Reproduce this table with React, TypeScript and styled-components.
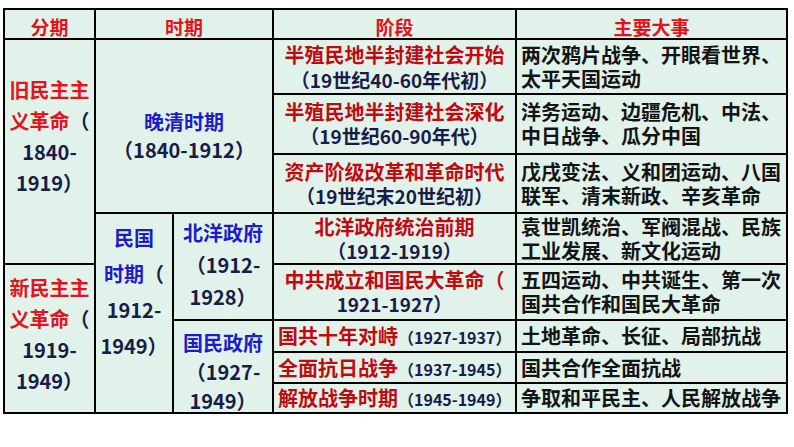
import React from "react";
import styled, { createGlobalStyle } from "styled-components";

const GlobalStyle = createGlobalStyle`
  body {
    margin: 0;
    background: #ffffff;
    font-family: "Noto Sans CJK SC", "Noto Sans", sans-serif;
  }
`;

type Tone = "red" | "darkred" | "blue" | "navy" | "black";

const tones: Record<Tone, string> = {
  red: "#e3141c",
  darkred: "#c00a10",
  blue: "#1c1cc8",
  navy: "#1a1c48",
  black: "#141414",
};

type Part = { t: string; tone: Tone; size?: number };
type Line = Part[];

const events: string[][] = [
  ["两次鸦片战争、开眼看世界、", "太平天国运动"],
  ["洋务运动、边疆危机、中法、", "中日战争、瓜分中国"],
  ["戊戌变法、义和团运动、八国", "联军、清末新政、辛亥革命"],
  ["袁世凯统治、军阀混战、民族", "工业发展、新文化运动"],
  ["五四运动、中共诞生、第一次", "国共合作和国民大革命"],
  ["土地革命、长征、局部抗战"],
  ["国共合作全面抗战"],
  ["争取和平民主、人民解放战争"],
];

const stages: { lines: Line[]; inline?: boolean; lh: number }[] = [
  {
    lh: 25,
    lines: [
      [{ t: "半殖民地半封建社会开始", tone: "darkred" }],
      [{ t: "（19世纪40-60年代初）", tone: "navy", size: 19 }],
    ],
  },
  {
    lh: 24,
    lines: [
      [{ t: "半殖民地半封建社会深化", tone: "darkred" }],
      [{ t: "（19世纪60-90年代）", tone: "navy", size: 19 }],
    ],
  },
  {
    lh: 24,
    lines: [
      [{ t: "资产阶级改革和革命时代", tone: "darkred" }],
      [{ t: "（19世纪末20世纪初）", tone: "navy", size: 19 }],
    ],
  },
  {
    lh: 24,
    lines: [
      [{ t: "北洋政府统治前期", tone: "darkred" }],
      [{ t: "（1912-1919）", tone: "navy", size: 19 }],
    ],
  },
  {
    lh: 24,
    lines: [
      [{ t: "中共成立和国民大革命（", tone: "darkred" }],
      [{ t: "1921-1927）", tone: "navy", size: 19 }],
    ],
  },
  {
    lh: 26,
    inline: true,
    lines: [
      [
        { t: "国共十年对峙", tone: "darkred" },
        { t: "（1927-1937）", tone: "navy", size: 16 },
      ],
    ],
  },
  {
    lh: 26,
    inline: true,
    lines: [
      [
        { t: "全面抗日战争", tone: "darkred" },
        { t: "（1937-1945）", tone: "navy", size: 16 },
      ],
    ],
  },
  {
    lh: 26,
    inline: true,
    lines: [
      [
        { t: "解放战争时期", tone: "darkred" },
        { t: "（1945-1949）", tone: "navy", size: 16 },
      ],
    ],
  },
];

const renderLines = (lines: Line[]) =>
  lines.map((line, i) => (
    <Row key={i}>
      {line.map((p, j) => (
        <Word key={j} $tone={p.tone} $size={p.size}>
          {p.t}
        </Word>
      ))}
    </Row>
  ));

const App = () => {
  return (
    <Page>
      <GlobalStyle />
      <Table>
        <HeadCell $col="1" $row="1">分期</HeadCell>
        <HeadCell $col="2 / 4" $row="1">时期</HeadCell>
        <HeadCell $col="4" $row="1">阶段</HeadCell>
        <HeadCell $col="5" $row="1">主要大事</HeadCell>

        <Cell $col="1" $row="2 / 6" $lh={31} $top $pt={34}>
          {renderLines([
            [{ t: "旧民主主", tone: "red" }],
            [
              { t: "义革命", tone: "red" },
              { t: "（", tone: "navy" },
            ],
            [{ t: "1840-", tone: "navy" }],
            [{ t: "1919）", tone: "navy" }],
          ])}
        </Cell>

        <Cell $col="2 / 4" $row="2 / 5" $lh={28} $pt={20}>
          {renderLines([
            [{ t: "晚清时期", tone: "blue" }],
            [{ t: "（1840-1912）", tone: "navy" }],
          ])}
        </Cell>

        <Cell $col="1" $row="6 / 10" $lh={31} $top $pt={7}>
          {renderLines([
            [{ t: "新民主主", tone: "red" }],
            [
              { t: "义革命", tone: "red" },
              { t: "（", tone: "navy" },
            ],
            [{ t: "1919-", tone: "navy" }],
            [{ t: "1949）", tone: "navy" }],
          ])}
        </Cell>

        <Cell $col="2" $row="5 / 10" $lh={36} $top $pt={6}>
          {renderLines([
            [{ t: "民国", tone: "blue" }],
            [
              { t: "时期", tone: "blue" },
              { t: "（", tone: "navy" },
            ],
            [{ t: "1912-", tone: "navy" }],
            [{ t: "1949）", tone: "navy" }],
          ])}
        </Cell>

        <Cell $col="3" $row="5 / 7" $lh={32} $top $pt={3}>
          {renderLines([
            [{ t: "北洋政府", tone: "blue" }],
            [{ t: "（1912-", tone: "navy" }],
            [{ t: "1928）", tone: "navy" }],
          ])}
        </Cell>

        <Cell $col="3" $row="7 / 10" $lh={29} $top $pt={7}>
          {renderLines([
            [{ t: "国民政府", tone: "blue" }],
            [{ t: "（1927-", tone: "navy" }],
            [{ t: "1949）", tone: "navy" }],
          ])}
        </Cell>

        {stages.map((s, i) => (
          <Cell
            key={`s${i}`}
            $col="4"
            $row={String(i + 2)}
            $lh={s.lh}
            $left={s.inline}
          >
            {renderLines(s.lines)}
          </Cell>
        ))}

        {events.map((ev, i) => (
          <Cell
            key={`e${i}`}
            $col="5"
            $row={String(i + 2)}
            $lh={ev.length > 1 ? 24 : 26}
            $left
          >
            {ev.map((line) => (
              <Row key={line}>
                <Word $tone="black">{line}</Word>
              </Row>
            ))}
          </Cell>
        ))}
      </Table>
    </Page>
  );
};

const Page = styled.div`
  padding: 8px 0 0 3px;
`;

const Table = styled.div`
  display: grid;
  width: 781px;
  grid-template-columns: 89px 76px 98px 241px 269px;
  grid-template-rows: 28px 53px 58px 57px 49px 54px 30px 29px 28px;
  gap: 2px;
  background: #000;
  border: 2px solid #000;
`;

const HeadCell = styled.div<{ $col: string; $row: string }>`
  grid-column: ${(p) => p.$col};
  grid-row: ${(p) => p.$row};
  background: #e0f2ea;
  display: flex;
  align-items: center;
  justify-content: center;
  padding-top: 5px;
  box-sizing: border-box;
  color: #e6121a;
  font-size: 19px;
  font-weight: 700;
  line-height: 1;
`;

const Cell = styled.div<{
  $col: string;
  $row: string;
  $lh: number;
  $left?: boolean;
  $top?: boolean;
  $pt?: number;
}>`
  grid-column: ${(p) => p.$col};
  grid-row: ${(p) => p.$row};
  background: #e0f2ea;
  display: flex;
  flex-direction: column;
  justify-content: ${(p) => (p.$top ? "flex-start" : "center")};
  align-items: ${(p) => (p.$left ? "flex-start" : "center")};
  padding: ${(p) => p.$pt ?? 0}px 0 0 ${(p) => (p.$left ? 4 : 0)}px;
  box-sizing: border-box;
  font-size: 20px;
  line-height: ${(p) => p.$lh}px;
  min-height: 0;
`;

const Row = styled.div`
  display: block;
  white-space: nowrap;
  font-size: 20px;
  height: 1lh;
`;

const Word = styled.span<{ $tone: Tone; $size?: number }>`
  color: ${(p) => tones[p.$tone]};
  font-size: ${(p) => p.$size ?? 20}px;
  font-weight: 700;
`;

export default App;
